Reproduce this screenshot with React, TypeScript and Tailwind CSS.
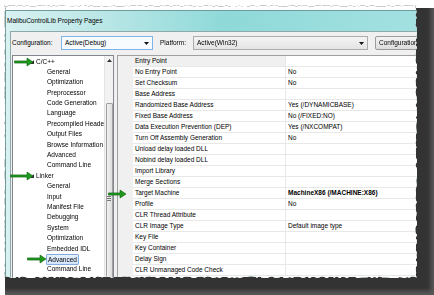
import React from 'react'

const font = "font-['Liberation_Sans',Arial,sans-serif]"

const tornEdge = (w: number, h: number) => {
  let seed = 11
  const rnd = () => {
    seed = (seed * 9301 + 49297) % 233280
    return seed / 233280
  }
  const pts: string[] = []
  for (let x = 0; x <= w; x += 2.5) pts.push(`${x}px ${rnd() * 1.8}px`)
  for (let y = 0; y <= h; y += 2.5) pts.push(`${w - rnd() * 1.8}px ${y}px`)
  for (let x = w; x >= 0; x -= 2.5) pts.push(`${x}px ${h - rnd() * 1.8}px`)
  for (let y = h; y >= 0; y -= 2.5) pts.push(`${rnd() * 1.8}px ${y}px`)
  return `polygon(${pts.join(',')})`
}

const GreenArrow = ({ len, className }: { len: number; className: string }) => (
  <svg width={len + 2} height={10} className={`absolute ${className}`}>
    <polygon
      points={`0.5,3.9 ${len - 6},3.9 ${len - 6},1 ${len},5 ${len - 6},9 ${len - 6},6.1 0.5,6.1`}
      fill="#1e9b1e"
      stroke="#0b5a0b"
      strokeWidth="0.6"
    />
  </svg>
)

const DropArrow = () => (
  <svg width="5" height="3" viewBox="0 0 5 3">
    <polygon points="0,0 5,0 2.5,3" fill="#111" />
  </svg>
)

const Expander = () => (
  <svg width="4" height="4" viewBox="0 0 4 4" className="mr-[1px]">
    <polygon points="4,0 4,4 0,4" fill="#333" />
  </svg>
)

type TreeItem = { t: string; top?: boolean; sel?: boolean }

const tree: TreeItem[] = [
  { t: 'C/C++', top: true },
  { t: 'General' },
  { t: 'Optimization' },
  { t: 'Preprocessor' },
  { t: 'Code Generation' },
  { t: 'Language' },
  { t: 'Precompiled Headers' },
  { t: 'Output Files' },
  { t: 'Browse Information' },
  { t: 'Advanced' },
  { t: 'Command Line' },
  { t: 'Linker', top: true },
  { t: 'General' },
  { t: 'Input' },
  { t: 'Manifest File' },
  { t: 'Debugging' },
  { t: 'System' },
  { t: 'Optimization' },
  { t: 'Embedded IDL' },
  { t: 'Advanced', sel: true },
  { t: 'Command Line' },
]

const props: [string, string, boolean?][] = [
  ['Entry Point', ''],
  ['No Entry Point', 'No'],
  ['Set Checksum', 'No'],
  ['Base Address', ''],
  ['Randomized Base Address', 'Yes (/DYNAMICBASE)'],
  ['Fixed Base Address', 'No (/FIXED:NO)'],
  ['Data Execution Prevention (DEP)', 'Yes (/NXCOMPAT)'],
  ['Turn Off Assembly Generation', 'No'],
  ['Unload delay loaded DLL', ''],
  ['Nobind delay loaded DLL', ''],
  ['Import Library', ''],
  ['Merge Sections', ''],
  ['Target Machine', 'MachineX86 (/MACHINE:X86)', true],
  ['Profile', 'No'],
  ['CLR Thread Attribute', ''],
  ['CLR Image Type', 'Default image type'],
  ['Key File', ''],
  ['Key Container', ''],
  ['Delay Sign', ''],
  ['CLR Unmanaged Code Check', ''],
]

const App = () => {
  return (
    <div className={`grid w-[434px] h-[295px] bg-white overflow-hidden ${font} text-[6.5px] text-black`}>
      <div className="col-start-1 row-start-1 ml-[5px] mt-[8px] w-[429px] h-[287px] bg-[#333] shadow-[inset_-3px_-4px_4px_#5a5a5a]" />
      <div className="col-start-1 row-start-1 ml-[4px] mt-[5px] w-[413px] h-[273px] [filter:drop-shadow(0_0_0.7px_#222)]">
        <div
          className="relative w-full h-full bg-white overflow-hidden"
          style={{ clipPath: tornEdge(413, 273) }}
        >
          <div className="h-[5px]" />
          <div className="ml-[1px] w-[440px] border border-[#6e9c9c] bg-gradient-to-r from-[#d9f1f1] via-[#8fd9d9] to-[#a6e2e2]">
            <div className="h-[20px] flex items-center pl-[1px] pb-[1px]">
              MalibuControlLib Property Pages
            </div>
            <div className="flex">
              <div className="w-[4px] shrink-0" />
              <div className="flex-1 h-[260px] bg-[#f0f0f0] border-l border-t border-[#8fa8a8] pl-[1px]">
                <div className="mt-[4px] h-[14px] flex items-center">
                  <div className="w-[49px]">Configuration:</div>
                  <div className="w-[92px] h-full flex items-center justify-between pl-[3px] pr-[3px] border border-[#7eb4ea] bg-[#f7fbfe]">
                    <span>Active(Debug)</span>
                    <DropArrow />
                  </div>
                  <div className="w-[33px] ml-[7px]">Platform:</div>
                  <div className="w-[175px] h-full flex items-center justify-between pl-[3px] pr-[3px] border border-[#acacac] bg-gradient-to-b from-[#f4f4f4] to-[#e4e4e4]">
                    <span>Active(Win32)</span>
                    <DropArrow />
                  </div>
                  <div className="ml-[7px] w-[70px] h-full flex items-center pl-[3px] border border-[#9a9a9a] rounded-[2px] bg-gradient-to-b from-[#f4f4f4] to-[#dcdcdc] whitespace-nowrap overflow-hidden">
                    Configuration Manager...
                  </div>
                </div>
                <div className="mt-[5px] flex">
                  <div className="w-[102px] h-[230px] flex border border-[#828790] bg-white">
                    <div className="flex-1 overflow-hidden pt-[0.5px]">
                      {tree.map((it, i) => (
                        <div
                          key={i}
                          className={`h-[10.4px] leading-[10.4px] whitespace-nowrap flex items-center ${it.top ? 'pl-[17px]' : 'pl-[33px]'}`}
                        >
                          {it.top && <Expander />}
                          <span
                            className={
                              it.sel
                                ? 'px-[1px] h-[11px] leading-[10px] border border-[#84acdd] bg-gradient-to-b from-[#e6f0fc] to-[#d2e4fa] rounded-[1px]'
                                : 'px-[1px]'
                            }
                          >
                            {it.t}
                          </span>
                        </div>
                      ))}
                    </div>
                    <div className="w-[9px] shrink-0 bg-[#f2f2f2] border-l border-[#e4e4e4] flex flex-col">
                      <div className="h-[9px] flex items-center justify-center">
                        <svg width="5" height="3" viewBox="0 0 5 3">
                          <polygon points="0,3 5,3 2.5,0" fill="#333" />
                        </svg>
                      </div>
                      <div className="h-[40px]" />
                      <div className="h-[190px] mx-[0.5px] border border-[#a0a0a0] rounded-[1px] bg-gradient-to-r from-[#f1f1f1] to-[#dedede] flex flex-col items-center">
                        <div className="mt-[92px] w-[4px] flex flex-col gap-[1px]">
                          <div className="h-px bg-[#777]" />
                          <div className="h-px bg-[#777]" />
                          <div className="h-px bg-[#777]" />
                        </div>
                      </div>
                    </div>
                  </div>
                  <div className="ml-[3px] w-[310px] h-[230px] flex border border-[#a0a0a0] bg-white">
                    <div className="w-[15px] shrink-0 bg-[#f0f0f0]" />
                    <div className="flex-1">
                      {props.map(([name, val, bold], i) => (
                        <div key={i} className="flex h-[11px] border-b border-[#e8e8e8]">
                          <div
                            className={`w-[152px] pl-[2px] leading-[10px] whitespace-nowrap ${i === 0 ? 'bg-[#f0f0f0]' : ''}`}
                          >
                            {name}
                          </div>
                          <div
                            className={`flex-1 pl-[2px] leading-[10px] border-l border-[#e8e8e8] whitespace-nowrap ${bold ? 'font-bold' : ''}`}
                          >
                            {val}
                          </div>
                        </div>
                      ))}
                    </div>
                  </div>
                </div>
              </div>
            </div>
          </div>
          <GreenArrow len={19} className="left-[10px] top-[52px]" />
          <GreenArrow len={23} className="left-[6px] top-[166px]" />
          <GreenArrow len={19} className="left-[23px] top-[249px]" />
          <GreenArrow len={18} className="left-[104px] top-[184px]" />
        </div>
      </div>
    </div>
  )
}

export default App
